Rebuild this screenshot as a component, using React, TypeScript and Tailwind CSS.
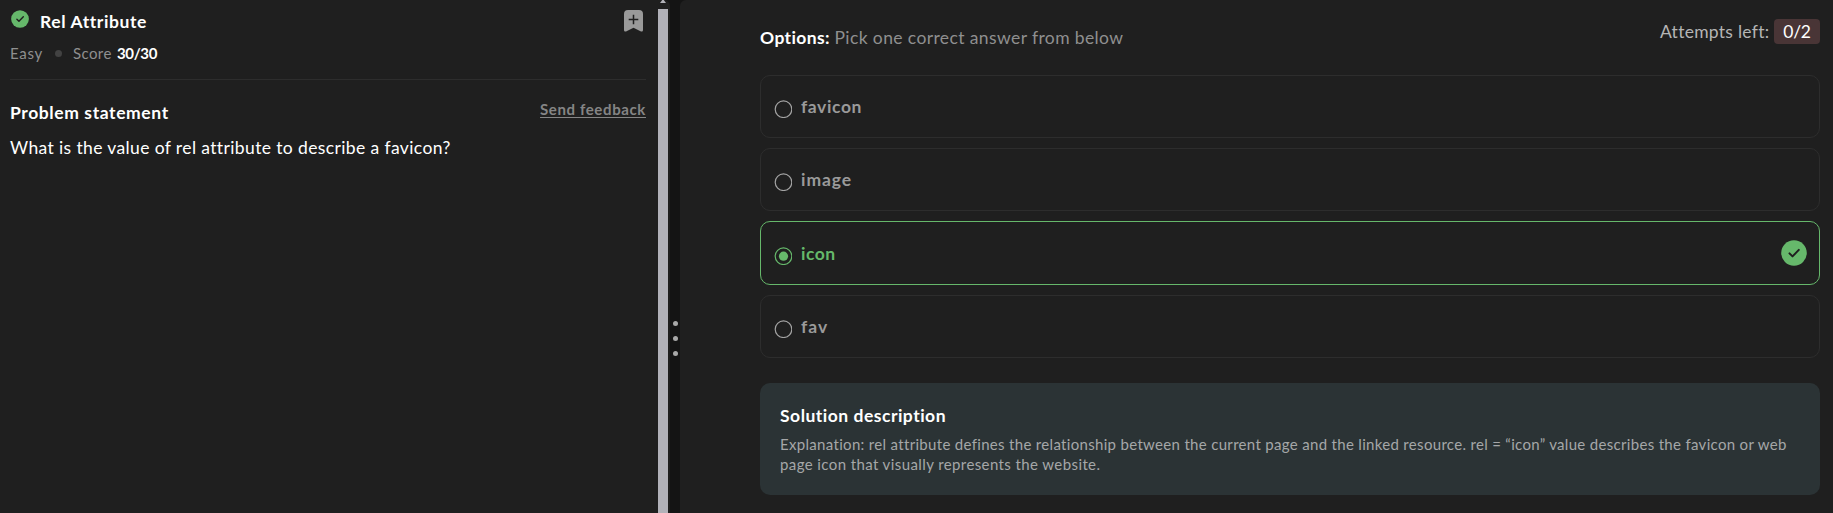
import React from 'react';

function CheckBadge({ className }: { className: string }) {
  return (
    <svg viewBox="0 0 26 26" className={className}>
      <circle cx="13" cy="13" r="12.8" fill="#66b86b" />
      <path d="M8.500 13.400l3 3 6.300-6.500" fill="none" stroke="#1f1f1f" strokeWidth="2" strokeLinecap="round" strokeLinejoin="round" />
    </svg>
  );
}

function Radio({ checked }: { checked: boolean }) {
  return (
    <svg viewBox="0 0 18 18" className="mt-[5px] h-[18px] w-[18px]">
      <circle cx="9.500" cy="9.200" r="8.300" fill="none" stroke={checked ? '#66b86b' : '#a3a3a3'} strokeWidth="1.2" />
      {checked && <circle cx="9.500" cy="9.200" r="4.600" fill="#66b86b" />}
    </svg>
  );
}

const options = [
  { label: 'favicon', tracking: 'ml-[9px] flex-1 font-bold tracking-[0.6px]' },
  { label: 'image', tracking: 'ml-[9px] flex-1 font-bold tracking-[0.95px]' },
  { label: 'icon', tracking: 'ml-[9px] mt-px flex-1 font-bold tracking-[0.5px]', correct: true },
  { label: 'fav', tracking: 'ml-[9px] flex-1 font-bold tracking-[1px]' },
];

export default function App() {
  return (
    <div className="flex h-[513px] w-[1833px] overflow-hidden bg-[#141414] font-['Lato',sans-serif] text-[17.5px] leading-5 text-white">
      <section className="flex w-[670px] rounded-tr-md bg-[#1f1f1f]">
        <div className="ml-2.5 w-[636px]">
          <header className="flex h-[80px] justify-between border-b border-[#2d2d2d]">
            <div>
              <div className="flex pt-[10px]">
                <CheckBadge className="ml-[1px] h-[18px] w-[18px]" />
                <h1 className="ml-[11px] pt-[2px] font-bold tracking-[0.6px] whitespace-nowrap">Rel Attribute</h1>
              </div>
              <div className="mt-[11px] flex items-center text-[15px] whitespace-nowrap text-[#8f8f8f]">
                <span className="w-[45px] tracking-[0.7px]">Easy</span>
                <span className="mr-[11px] h-[7px] w-[7px] rounded-full bg-[#424242]" />
                <span className="w-[44px] tracking-[0.4px]">Score</span>
                <span className="font-bold tracking-[-0.35px] text-white">30/30</span>
              </div>
            </div>
            <svg viewBox="0 0 19 22" className="mt-2.5 mr-[3px] h-[22px] w-[19px]">
              <path d="M4 0h11q4 0 4 4v16q0 2-2 1.400L9.500 17.800 2 21.400Q0 22 0 20V4Q0 0 4 0z" fill="#9a9a9a" />
              <path d="M9.500 4.700v9.600M4.700 9.500h9.600" stroke="#1f1f1f" strokeWidth="1.500" />
            </svg>
          </header>
          <div className="flex justify-between pt-[23px] whitespace-nowrap">
            <h2 className="font-bold tracking-[0.6px]">Problem statement</h2>
            <a className="-mt-1 text-[15px] font-bold tracking-[0.62px] text-[#858585] underline underline-offset-2">Send feedback</a>
          </div>
          <p className="mt-[15px] tracking-[0.38px] whitespace-nowrap">What is the value of rel attribute to describe a favicon?</p>
        </div>
        <div className="ml-3 w-2.5">
          <svg viewBox="0 0 10 9" className="h-[9px] w-[10px]"><path d="M5 -1l3 4H2z" fill="#b2b2b9" /></svg>
          <div className="h-[504px] bg-[#b2b2b9]" />
        </div>
      </section>
      <div className="flex w-2.5 flex-col items-center gap-2.5 pt-[320.5px] pl-px">
        <span className="h-[5px] w-[5px] rounded-full bg-[#a8a8a8]" />
        <span className="h-[5px] w-[5px] rounded-full bg-[#a8a8a8]" />
        <span className="h-[5px] w-[5px] rounded-full bg-[#a8a8a8]" />
      </div>
      <main className="flex-1 rounded-tl-md bg-[#1f1f1f] pr-[13px] pl-20">
        <div className="flex h-[75px] justify-between whitespace-nowrap">
          <p className="pt-[28px] tracking-[0.39px] text-[#8f8f8f]"><b className="inline-block w-[74.5px] text-white">Options:</b>Pick one correct answer from below</p>
          <div className="flex pt-[19px] text-[#b5b5b5]">
            <span className="w-[114px] pt-[3px] tracking-[0.27px]">Attempts left:</span>
            <span className="h-[25px] w-[46px] rounded bg-[#493536] pt-[3px] text-center tracking-[-0.3px] text-white">0/2</span>
          </div>
        </div>
        <div className="flex flex-col gap-2.5">
          {options.map((o) => (
            <div
              key={o.label}
              className={
                o.correct
                  ? 'flex h-16 items-center rounded-[10px] border border-[#66b86b] pr-3 pl-[13px] text-[#66b86b]'
                  : 'flex h-[63px] items-center rounded-[10px] border border-[#2d2d2d] pr-3 pl-[13px] text-[#9a9a9a]'
              }
            >
              <Radio checked={!!o.correct} />
              <span className={o.tracking}>{o.label}</span>
              {o.correct && <CheckBadge className="h-[26px] w-[26px]" />}
            </div>
          ))}
        </div>
        <div className="mt-[25px] h-28 rounded-[10px] bg-[#2b3335] px-5 pt-[23px] whitespace-nowrap">
          <h3 className="font-bold tracking-[0.5px]">Solution description</h3>
          <p className="mt-2 text-[15px] text-[#a5a7a8]">
            <span className="block tracking-[0.318px]">Explanation: rel attribute defines the relationship between the current page and the linked resource. rel = “icon” value describes the favicon or web</span>
            <span className="block tracking-[0.4px]">page icon that visually represents the website.</span>
          </p>
        </div>
      </main>
    </div>
  );
}
